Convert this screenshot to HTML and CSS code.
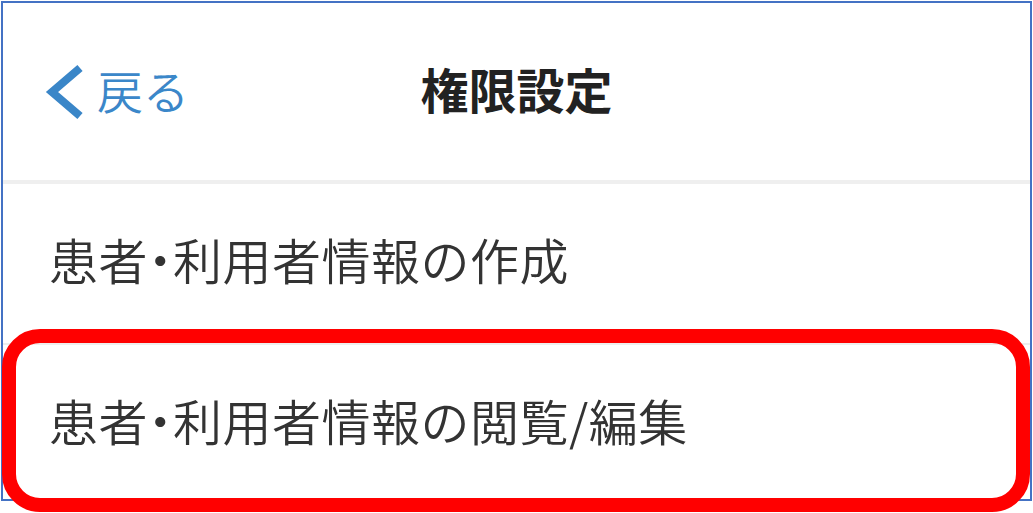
FILE: index.html
```html
<!DOCTYPE html>
<html lang="ja">
<head>
<meta charset="utf-8">
<title>権限設定</title>
<link rel="stylesheet" href="styles.css">
</head>
<body>
  <div class="frame">
    <header class="nav">
      <a class="back" href="#">
        <svg class="back-icon" width="40" height="56" viewBox="0 0 40 56" aria-hidden="true">
          <polyline points="35,4 7,28 35,52" fill="none" stroke="currentColor" stroke-width="8" stroke-linejoin="miter"/>
        </svg>
        <span class="back-label">戻る</span>
      </a>
      <h1 class="nav-title">権限設定</h1>
      <span class="nav-spacer"></span>
    </header>
    <ul class="menu">
      <li class="menu-item">患者<span class="dot">・</span>利用者情報の作成</li>
      <li class="menu-item">患者<span class="dot">・</span>利用者情報の閲覧/編集</li>
    </ul>
  </div>
  <div class="highlight"></div>
</body>
</html>
```

FILE: styles.css
```css
html, body {
  margin: 0;
  padding: 0;
  background: #ffffff;
}

body {
  position: relative;
  width: 1033px;
  height: 513px;
  overflow: hidden;
  font-family: "Noto Sans CJK JP", "Noto Sans", sans-serif;
  color: #333333;
}

.frame {
  box-sizing: border-box;
  margin: 1px 0 0 1px;
  width: 1031px;
  height: 500px;
  border: 2px solid #4472c4;
  display: flex;
  flex-direction: column;
  background: #ffffff;
}

.nav {
  height: 177px;
  flex: none;
  display: grid;
  grid-template-columns: 1fr auto 1fr;
  align-items: center;
  border-bottom: 4px solid #efefef;
}

.back {
  display: flex;
  align-items: center;
  gap: 12px;
  padding-left: 42px;
  color: #3b87c9;
  text-decoration: none;
}

.back-icon {
  display: block;
  color: #3a86c8;
}

.back-label {
  font-size: 46px;
  font-weight: 350;
  line-height: 1;
  padding-bottom: 6px;
}

.nav-title {
  margin: 0;
  font-size: 48px;
  font-weight: 700;
  line-height: 1;
  color: #222222;
  padding-bottom: 8px;
}

.menu {
  list-style: none;
  margin: 0;
  padding: 0;
  flex: 1;
  display: flex;
  flex-direction: column;
}

.menu-item {
  box-sizing: border-box;
  height: 161px;
  display: flex;
  align-items: center;
  padding-left: 46px;
  padding-bottom: 10px;
  font-size: 49px;
  font-weight: 350;
  line-height: 1;
  letter-spacing: 0.5px;
  color: #333333;
  border-bottom: 2px solid #eeeeee;
}

.menu-item:last-child {
  flex: 1;
  padding-bottom: 6px;
  border-bottom: none;
}

/* half-width middle dot between the two nouns */
.dot {
  font-feature-settings: "halt";
}

/* red call-out drawn over the second row */
.highlight {
  position: absolute;
  left: 2px;
  top: 329px;
  width: 1028px;
  height: 183px;
  box-sizing: border-box;
  border: 14px solid #ff0000;
  border-radius: 38px;
  pointer-events: none;
}
```
